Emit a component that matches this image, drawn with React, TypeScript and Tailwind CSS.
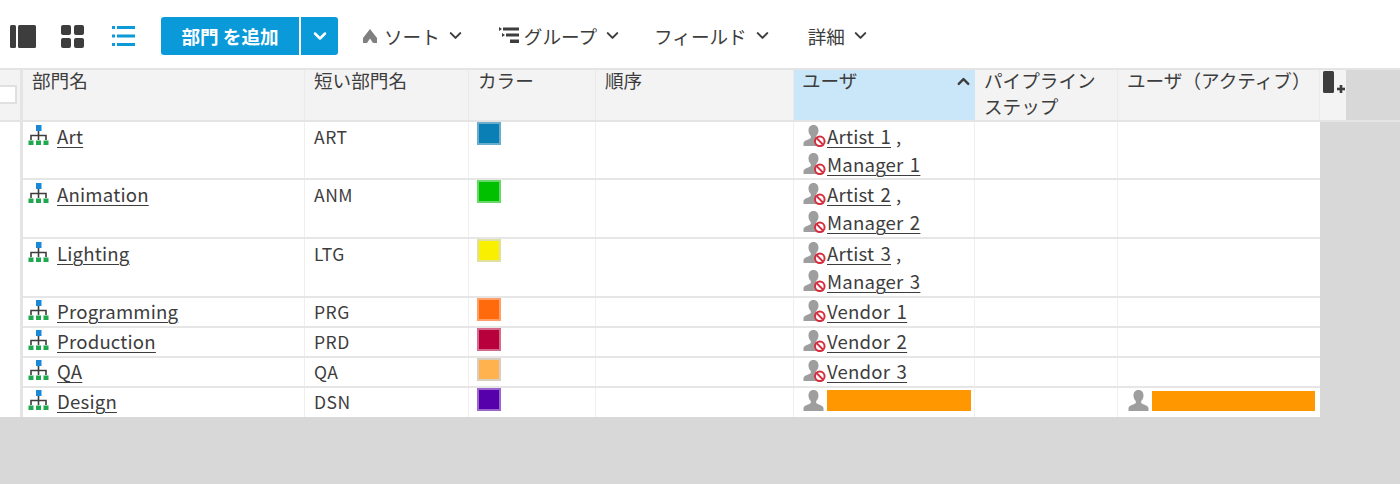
import type { ReactNode } from "react";
import { ChevronDown, ChevronUp } from "lucide-react";

const font = "font-['Noto_Sans_CJK_JP','Noto_Sans',sans-serif]";

type Row = {
  name: string;
  code: string;
  color: string;
  edge: string;
  h: string;
  users: string[];
  redacted?: boolean;
};

const rows: Row[] = [
  { name: "Art", code: "ART", color: "bg-[#0a7fb5]", edge: "border-[#6aaccb]", h: "h-[58px]", users: ["Artist 1", "Manager 1"] },
  { name: "Animation", code: "ANM", color: "bg-[#00c000]", edge: "border-[#66d966]", h: "h-[59px]", users: ["Artist 2", "Manager 2"] },
  { name: "Lighting", code: "LTG", color: "bg-[#f8f000]", edge: "border-[#e0e0a0]", h: "h-[59px]", users: ["Artist 3", "Manager 3"] },
  { name: "Programming", code: "PRG", color: "bg-[#ff6a0d]", edge: "border-[#ff9f66]", h: "h-[30px]", users: ["Vendor 1"] },
  { name: "Production", code: "PRD", color: "bg-[#b8003c]", edge: "border-[#d66a8c]", h: "h-[30px]", users: ["Vendor 2"] },
  { name: "QA", code: "QA", color: "bg-[#ffb24d]", edge: "border-[#d9cfc0]", h: "h-[30px]", users: ["Vendor 3"] },
  { name: "Design", code: "DSN", color: "bg-[#5500aa]", edge: "border-[#9a66cc]", h: "h-[29px]", users: [], redacted: true },
];

function PanelIcon() {
  return (
    <svg width="26" height="23" viewBox="0 0 26 23" className="fill-[#3d3d3d]">
      <rect x="0" y="0" width="6" height="23" rx="1.5" />
      <rect x="8" y="0" width="18" height="23" rx="1.5" />
    </svg>
  );
}

function GridIcon() {
  return (
    <svg width="23" height="23" viewBox="0 0 23 23" className="fill-[#3d3d3d]">
      <rect x="0" y="0" width="10" height="10" rx="2" />
      <rect x="13" y="0" width="10" height="10" rx="2" />
      <rect x="0" y="13" width="10" height="10" rx="2" />
      <rect x="13" y="13" width="10" height="10" rx="2" />
    </svg>
  );
}

function ListIcon() {
  return (
    <svg width="23" height="20" viewBox="0 0 23 20" className="fill-[#0d9ad8]">
      <rect x="0" y="0" width="3" height="3" />
      <rect x="5" y="0" width="18" height="3" />
      <rect x="0" y="8.5" width="3" height="3" />
      <rect x="5" y="8.5" width="18" height="3" />
      <rect x="0" y="17" width="3" height="3" />
      <rect x="5" y="17" width="18" height="3" />
    </svg>
  );
}

function SortIcon() {
  return (
    <svg width="14" height="14" viewBox="0 0 14 14" className="fill-[#808080]">
      <path d="M7 0 L14 9 L14 14 L10 14 L7 9.5 L4 14 L0 14 L0 9 Z" />
    </svg>
  );
}

function GroupIcon() {
  return (
    <svg width="20" height="17" viewBox="0 0 20 17" className="fill-[#3d3d3d]">
      <path d="M0 0 L3 2 L0 4 Z" />
      <rect x="4" y="0.5" width="16" height="3" />
      <rect x="7" y="6.5" width="13" height="3" />
      <path d="M3 6 L6 8 L3 10 Z" />
      <rect x="11" y="12.5" width="9" height="3.5" />
    </svg>
  );
}

function TreeIcon() {
  return (
    <svg width="21" height="21" viewBox="0 0 21 21" className="shrink-0">
      <rect x="8" y="0" width="5.5" height="6" fill="#1a88d8" />
      <path d="M10.5 6 V15 M3 15 V10.5 H18 V15" fill="none" stroke="#3d3d3d" strokeWidth="1.6" />
      <rect x="0.5" y="15.5" width="5" height="4.5" fill="#1fa84f" />
      <rect x="8" y="15.5" width="5" height="4.5" fill="#1fa84f" />
      <rect x="15.5" y="15.5" width="5" height="4.5" fill="#1fa84f" />
    </svg>
  );
}

function UserIcon({ banned }: { banned?: boolean }) {
  return (
    <svg width="24" height="22" viewBox="0 0 24 22" className="shrink-0">
      <path
        d="M10.5 0 C14 0 15.5 2.5 15.5 5.5 C15.5 8 14.5 10 13.2 11 V13 C14.5 14.5 20 15 20.5 18 V21 H0.5 V18 C1 15 6.5 14.5 7.8 13 V11 C6.5 10 5.5 8 5.5 5.5 C5.5 2.5 7 0 10.5 0 Z"
        fill="#9e9e9e"
      />
      {banned && (
        <g>
          <circle cx="16.8" cy="16.3" r="4.8" fill="#ffffff" stroke="#d32f3f" strokeWidth="2" />
          <path d="M13.5 13 L20 19.6" stroke="#d32f3f" strokeWidth="2" />
        </g>
      )}
    </svg>
  );
}

function ColumnAddIcon() {
  return (
    <svg width="23" height="26" viewBox="0 0 23 26" className="fill-[#3d3d3d]">
      <rect x="0" y="0" width="11" height="22" rx="1.5" />
      <rect x="16.7" y="14" width="2.6" height="8" />
      <rect x="14" y="16.7" width="8" height="2.6" />
    </svg>
  );
}

function HeaderCell({ label, className }: { label: string; className: string }) {
  return (
    <div className={`shrink-0 border-r border-[#ebebeb] pl-[9px] leading-[26px] ${className}`}>
      <div className="-mt-[3px]">{label}</div>
    </div>
  );
}

function ToolbarMenu({ label, icon, className }: { label: string; icon?: ReactNode; className: string }) {
  return (
    <div className={`flex items-center ${className}`}>
      {icon}
      <span>{label}</span>
      <ChevronDown size={19} strokeWidth={2.6} className="ml-[6px] text-[#3d3d3d]" />
    </div>
  );
}

export default function App() {
  return (
    <div className={`${font} flex h-[484px] w-[1400px] flex-col overflow-hidden bg-[#d8d8d8] text-[18.6px] text-[#3d3d3d]`}>
      {/* toolbar */}
      <div className="flex h-[68px] shrink-0 items-center bg-white pl-[10px] pt-[4px]">
        <PanelIcon />
        <div className="ml-[25px]"><GridIcon /></div>
        <div className="ml-[28px]"><ListIcon /></div>
        <div className="ml-[26px] flex h-[38px] font-bold text-white">
          <div className="flex w-[138px] items-center justify-center rounded-l-[3px] bg-[#0a9ad9]">部門 を追加</div>
          <div className="ml-[2px] flex w-[37px] items-center justify-center rounded-r-[3px] bg-[#0a9ad9]">
            <ChevronDown size={20} strokeWidth={3} />
          </div>
        </div>
        <ToolbarMenu className="ml-[25px]" label="ソート" icon={<div className="mr-[7px] flex"><SortIcon /></div>} />
        <ToolbarMenu className="ml-[34px]" label="グループ" icon={<div className="mr-[5px] flex"><GroupIcon /></div>} />
        <ToolbarMenu className="ml-[32px]" label="フィールド" />
        <ToolbarMenu className="ml-[36px]" label="詳細" />
      </div>

      {/* header */}
      <div className="flex h-[54px] shrink-0 border-y-2 border-[#e4e4e4]">
        <div className="flex w-[23px] shrink-0 items-start border-r-[3px] border-[#e4e4e4] bg-[#f3f3f3] pt-[15px]">
          <div className="h-[19px] w-[17px] border-2 border-l-0 border-[#e0e0e0] bg-white" />
        </div>
        <div className="flex bg-[#f3f3f3]">
          <HeaderCell label="部門名" className="w-[282px]" />
          <HeaderCell label="短い部門名" className="w-[164px]" />
          <HeaderCell label="カラー" className="w-[127px]" />
          <HeaderCell label="順序" className="w-[198px]" />
          <div className="flex w-[181px] shrink-0 justify-between bg-[#cae7f9] pl-[8px] pr-[2px] leading-[26px]">
            <span className="-mt-[3px]">ユーザ</span>
            <ChevronUp size={19} strokeWidth={3} className="mt-[2px]" />
          </div>
          <HeaderCell label="パイプライン ステップ" className="w-[143px]" />
          <HeaderCell label="ユーザ（アクティブ）" className="w-[202px]" />
          <div className="w-[26px] shrink-0 pl-[3px] pt-[1px]"><ColumnAddIcon /></div>
        </div>
      </div>

      {/* rows */}
      {rows.map((row) => {
        const tall = row.users.length > 1;
        return (
          <div key={row.name} className={`flex shrink-0 ${row.h} w-[1320px]`}>
            <div className="w-[20px] shrink-0 bg-white" />
            <div className="w-[3px] shrink-0 bg-[#e4e4e4]" />
            <div className={`flex min-w-0 flex-1 bg-white leading-[28px] tracking-[0.2px] ${row.redacted ? "" : "border-b-2 border-[#e6e6e6]"}`}>
              <div className={`flex w-[282px] shrink-0 items-start gap-[8px] border-r border-[#efefef] pl-[5px] ${tall ? "pt-[3px]" : "pt-[2px]"}`}>
                <TreeIcon />
                <a className="-mt-[3px] underline decoration-1 underline-offset-[3px]">{row.name}</a>
              </div>
              <div className={`w-[164px] shrink-0 border-r border-[#efefef] pl-[9px] text-[17.5px] tracking-[0.5px] ${tall ? "pt-px" : ""}`}>{row.code}</div>
              <div className="w-[127px] shrink-0 border-r border-[#efefef] pl-[8px]">
                <div className={`h-[23px] w-[24px] border-2 ${row.color} ${row.edge}`} />
              </div>
              <div className="w-[198px] shrink-0 border-r border-[#efefef]" />
              <div className={`w-[181px] shrink-0 border-r border-[#efefef] pl-[9px] [word-spacing:2px] ${tall ? "" : "-mt-px"}`}>
                {row.users.map((user, i) => (
                  <div key={user} className="flex h-[28px] items-center">
                    <UserIcon banned />
                    <a className="underline decoration-1 underline-offset-[3px]">{user}</a>
                    {i < row.users.length - 1 && <span className="ml-[5px]">,</span>}
                  </div>
                ))}
                {row.redacted && (
                  <div className="flex h-[28px] items-center">
                    <UserIcon />
                    <div className="-mt-[2px] h-[21px] w-[144px] bg-[#ff9800]" />
                  </div>
                )}
              </div>
              <div className="w-[143px] shrink-0 border-r border-[#efefef]" />
              <div className="flex-1 pl-[10px]">
                {row.redacted && (
                  <div className="-mt-px flex h-[28px] items-center">
                    <UserIcon />
                    <div className="h-[20px] w-[163px] bg-[#ff9800]" />
                  </div>
                )}
              </div>
            </div>
          </div>
        );
      })}
    </div>
  );
}
